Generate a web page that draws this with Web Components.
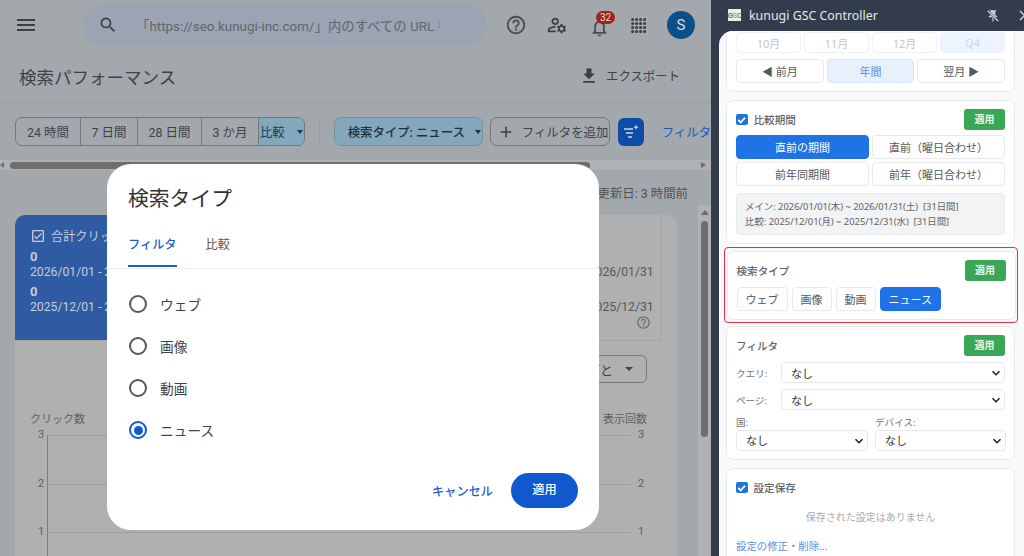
<!DOCTYPE html>
<html lang="ja">
<head>
<meta charset="utf-8">
<title>検索パフォーマンス</title>
<style>
  html, body { margin: 0; height: 100%; overflow: hidden; background: #323c4d; }
  body { display: flex; width: 1024px; height: 556px; font-family: Roboto, "Noto Sans CJK JP", sans-serif; }
</style>
</head>
<body>
<sc-page>
  <sc-dialog slot="dialog" heading="検索タイプ"></sc-dialog>
</sc-page>
<gsc-panel></gsc-panel>

<script>
// material icon paths, shared by the elements below
const ICONS = {
    menu: 'M3 18h18v-2H3v2zm0-5h18v-2H3v2zm0-7v2h18V6H3z',
    search: 'M15.5 14h-.79l-.28-.27A6.471 6.471 0 0 0 16 9.5 6.5 6.5 0 1 0 9.5 16c1.61 0 3.09-.59 4.23-1.57l.27.28v.79l5 4.99L20.49 19l-4.99-5zm-6 0C7.01 14 5 11.99 5 9.5S7.01 5 9.5 5 14 7.01 14 9.5 11.99 14 9.5 14z',
    help: 'M11 18h2v-2h-2v2zm1-16C6.48 2 2 6.48 2 12s4.48 10 10 10 10-4.48 10-10S17.52 2 12 2zm0 18c-4.41 0-8-3.59-8-8s3.59-8 8-8 8 3.59 8 8-3.59 8-8 8zm0-14c-2.21 0-4 1.79-4 4h2c0-1.1.9-2 2-2s2 .9 2 2c0 2-3 1.75-3 5h2c0-2.25 3-2.5 3-5 0-2.21-1.79-4-4-4z',
    manage: 'M4 18v-.65c0-.34.16-.66.41-.81C6.1 15.53 8.03 15 10 15c.03 0 .05 0 .08.01.1-.7.3-1.37.59-1.98-.22-.02-.44-.03-.67-.03-2.42 0-4.68.67-6.61 1.82-.88.52-1.39 1.5-1.39 2.53V20h9.26c-.42-.6-.75-1.28-.97-2H4zM10 12c2.21 0 4-1.79 4-4s-1.79-4-4-4-4 1.79-4 4 1.79 4 4 4zm0-6c1.1 0 2 .9 2 2s-.9 2-2 2-2-.9-2-2 .9-2 2-2zM20.75 16c0-.22-.03-.42-.06-.63l1.14-1.01-1-1.73-1.45.49c-.32-.27-.68-.48-1.08-.63L18 11h-2l-.3 1.49c-.4.15-.76.36-1.08.63l-1.45-.49-1 1.73 1.14 1.01c-.03.21-.06.41-.06.63s.03.42.06.63l-1.14 1.01 1 1.73 1.45-.49c.32.27.68.48 1.08.63L16 21h2l.3-1.49c.4-.15.76-.36 1.08-.63l1.45.49 1-1.73-1.14-1.01c.03-.21.06-.41.06-.63zM17 18c-1.1 0-2-.9-2-2s.9-2 2-2 2 .9 2 2-.9 2-2 2z',
    bell: 'M12 22c1.1 0 2-.9 2-2h-4c0 1.1.9 2 2 2zm6-6v-5c0-3.07-1.63-5.64-4.5-6.32V4c0-.83-.67-1.5-1.5-1.5s-1.5.67-1.5 1.5v.68C7.64 5.36 6 7.92 6 11v5l-2 2v1h16v-1l-2-2zm-2 1H8v-6c0-2.48 1.51-4.5 4-4.5s4 2.02 4 4.5v6z',
    download: 'M5 20h14v-2H5v2zM19 9h-4V3H9v6H5l7 7 7-7z',
    add: 'M19 13h-6v6h-2v-6H5v-2h6V5h2v6h6v2z',
    check: 'M19 3H5c-1.1 0-2 .9-2 2v14c0 1.1.9 2 2 2h14c1.1 0 2-.9 2-2V5c0-1.1-.9-2-2-2zm0 16H5V5h14v14zM17.99 9l-1.41-1.42-6.59 6.59-2.58-2.57-1.42 1.41 4 3.99z',
    pin: 'M16 9V4h1c.55 0 1-.45 1-1s-.45-1-1-1H7c-.55 0-1 .45-1 1s.45 1 1 1h1v5c0 1.66-1.34 3-3 3v2h5.97v7l1 1 1-1v-7H19v-2c-1.66 0-3-1.34-3-3z'
};
const icon = (name, size, color) =>
    `<svg width="${size}" height="${size}" viewBox="0 0 24 24" fill="${color}"><path d="${ICONS[name]}"/></svg>`;

class ScTopbar extends HTMLElement {
    constructor() {
        super();
        this.attachShadow({mode: 'open'});
        let dots = '';
        for (let y = 0; y < 4; y++) for (let x = 0; x < 4; x++) dots += `<circle cx="${1.6 + x * 4}" cy="${1.6 + y * 4}" r="1.5"/>`;
        this.shadowRoot.innerHTML = `
            <style>
                :host { display: flex; align-items: center; height: 50px; flex: none; }
                .menu { display: flex; margin-left: 14px; }
                .search { display: flex; align-items: center; width: 404px; height: 42px; margin-left: 45px; border-radius: 21px; background: #9aa4b2; }
                .search svg { margin-left: 15px; flex: none; }
                .q { width: 304px; margin-left: 18px; overflow: hidden; white-space: nowrap; font-size: 13.4px; color: #5f666e; }
                .btn { display: flex; position: relative; }
                .badge { position: absolute; left: 7px; top: -6px; width: 19px; height: 13px; border-radius: 7px; background: #a3201f; color: #e6dcdc; font-size: 10px; line-height: 13px; text-align: center; }
                .avatar { width: 28px; height: 28px; border-radius: 50%; background: #0b4f87; color: #d5dde3; font-size: 15px; line-height: 28px; text-align: center; margin-left: 21px; }
            </style>
            <span class="menu">${icon('menu', 24, '#3c3f42')}</span>
            <div class="search">${icon('search', 20, '#3c4043')}<span class="q">「https://seo.kunugi-inc.com/」内のすべての URL を検査</span></div>
            <span class="btn" style="margin-left:18px">${icon('help', 22, '#4a4d50')}</span>
            <span class="btn" style="margin-left:19px">${icon('manage', 22, '#3c3f42')}</span>
            <span class="btn" style="margin-left:21px;top:2px">${icon('bell', 21, '#4a4d50')}<span class="badge">32</span></span>
            <span class="btn" style="margin-left:21px"><svg width="15" height="15" viewBox="0 0 15 15" fill="#3c3f42">${dots}</svg></span>
            <span class="avatar">S</span>
        `;
    }
}

class ScTitlebar extends HTMLElement {
    constructor() {
        super();
        this.attachShadow({mode: 'open'});
        this.shadowRoot.innerHTML = `
            <style>
                :host { display: flex; align-items: center; justify-content: space-between; height: 52px; flex: none; padding: 0 31px 0 19px; border-bottom: 1px solid #9b9fa2; color: #3f4245; }
                h1 { margin: 0; font-size: 17.5px; font-weight: 400; }
                .export { display: flex; align-items: center; gap: 7px; font-size: 12.4px; }
            </style>
            <h1>検索パフォーマンス</h1>
            <div class="export">${icon('download', 20, '#3c3f42')}<span>エクスポート</span></div>
        `;
    }
}

class ScToolbar extends HTMLElement {
    constructor() {
        super();
        this.attachShadow({mode: 'open'});
        const caret = '<i class="caret"></i>';
        this.shadowRoot.innerHTML = `
            <style>
                :host { display: flex; align-items: center; height: 29px; flex: none; margin: 14px 0 0 15px; font-size: 12.4px; color: #404346; white-space: nowrap; }
                .seg { display: flex; width: 313px; height: 29px; box-sizing: border-box; border: 1px solid #74787b; border-radius: 7px; overflow: hidden; }
                .seg span { display: flex; align-items: center; justify-content: center; border-right: 1px solid #74787b; box-sizing: border-box; }
                .seg .on { background: #84a7bb; color: #0e3e63; border-right: 0; gap: 12px; }
                .sep { width: 1px; height: 29px; background: #999da0; margin: 0 14px; }
                .chip { display: flex; align-items: center; height: 29px; box-sizing: border-box; border-radius: 7px; }
                .type { width: 160px; background: #84a7bb; border: 1px solid #74909f; padding-left: 13px; gap: 10px; color: #1c3240; font-weight: 500; }
                .add { width: 129px; margin-left: 7px; border: 1px solid #74787b; padding-left: 6px; gap: 7px; }
                .sq { display: flex; align-items: center; justify-content: center; width: 28px; height: 28px; margin-left: 8px; border-radius: 6px; background: #0f4ca8; }
                .more { color: #1558c0; margin-left: 18px; }
                .caret { width: 0; height: 0; border: 3.5px solid transparent; border-top: 4px solid currentColor; border-bottom: 0; }
            </style>
            <div class="seg">
                <span style="width:65px">24 時間</span><span style="width:57px">7 日間</span><span style="width:64px">28 日間</span><span style="width:57px">3 か月</span><span class="on" style="flex:1">比較 ${caret}</span>
            </div>
            <div class="sep"></div>
            <div class="chip type">検索タイプ: ニュース ${caret}</div>
            <div class="chip add">${icon('add', 18, '#3c3f42')}<span>フィルタを追加</span></div>
            <div class="sq"><svg width="18" height="18" viewBox="0 0 18 18" fill="none" stroke="#cdd7ea" stroke-width="1.4"><path d="M2 6h9M4 10h7M6 14h4"/><path d="M14 1.5l.8 2 2 .8-2 .8-.8 2-.8-2-2-.8 2-.8z" fill="#cdd7ea" stroke="none"/></svg></div>
            <span class="more">フィルタ</span>
        `;
    }
}

class ScHscroll extends HTMLElement {
    constructor() {
        super();
        this.attachShadow({mode: 'open'});
        this.shadowRoot.innerHTML = `
            <style>
                :host { display: flex; align-items: center; height: 10px; flex: none; margin-top: 14px; background: #b0b1b2; }
                .l, .r { width: 0; height: 0; border: 3.5px solid transparent; }
                .l { border-left: 0; border-right: 4px solid #6e6e6e; }
                .t { width: 580px; height: 7px; margin-left: 6px; border-radius: 4px; background: #6e6e6e; }
                .r { border-right: 0; border-left: 5px solid #6e6e6e; margin-left: auto; margin-right: 5px; }
            </style>
            <i class="l"></i><i class="t"></i><i class="r"></i>
        `;
    }
}

class ScTile extends HTMLElement {
    constructor() {
        super();
        this.attachShadow({mode: 'open'});
        const on = this.hasAttribute('on');
        this.shadowRoot.innerHTML = `
            <style>
                :host { display: block; padding: 14px 0 0 15px; font-size: 12.2px; white-space: nowrap; overflow: hidden; position: relative; color: ${on ? '#c3cddc' : '#55585b'}; background: ${on ? '#2f5ba3' : '#b0b0b0'}; }
                .h { display: flex; align-items: center; gap: 5px; height: 14px; }
                b { display: block; font-size: 13px; line-height: 15px; margin-top: 6px; font-weight: 700; }
                .d { display: block; line-height: 15px; margin-top: 1px; }
                .q { position: absolute; right: 10px; bottom: 10px; display: flex; }
            </style>
            <div class="h">${on ? icon('check', 16, '#c3cddc') : ''}<span>${this.getAttribute('label')}</span></div>
            <b>0</b><span class="d">2026/01/01 - 2026/01/31</span>
            <b style="margin-top:4px">0</b><span class="d">2025/12/01 - 2025/12/31</span>
            ${this.hasAttribute('help') ? `<span class="q">${icon('help', 15, '#6a6d70')}</span>` : ''}
        `;
    }
}

class ScChart extends HTMLElement {
    constructor() {
        super();
        this.attachShadow({mode: 'open'});
        const rows = ['3', '2', '1', '0'].map(n => `<span class="n">${n}</span><span class="g"></span><span class="n r">${n}</span>`).join('');
        this.shadowRoot.innerHTML = `
            <style>
                :host { display: block; padding: 0 15px; font-size: 11px; color: #5d6063; }
                .by { display: flex; align-items: center; justify-content: flex-end; gap: 12px; width: 130px; height: 28px; box-sizing: border-box; margin: 14px 0 0 auto; padding-right: 13px; border: 1px solid #77797b; border-radius: 6px; font-size: 13px; color: #404346; }
                .by i { border: 4px solid transparent; border-top: 4px solid #404346; border-bottom: 0; }
                .heads { display: flex; justify-content: space-between; margin-top: 29px; line-height: 16px; }
                .plot { display: grid; grid-template-columns: 17px 1fr 17px; grid-auto-rows: 48.5px; margin-top: 7px; margin-right: -1px; }
                .n { line-height: 0; padding-left: 8px; }
                .n.r { padding-left: 7px; }
                .g { border-top: 1px solid #9e9e9e; border-left: 1px solid #7d7d7d; }
            </style>
            <div class="by">日ごと <i></i></div>
            <div class="heads"><span>クリック数</span><span>表示回数</span></div>
            <div class="plot">${rows}</div>
        `;
    }
}

class ScVscroll extends HTMLElement {
    constructor() {
        super();
        this.attachShadow({mode: 'open'});
        this.shadowRoot.innerHTML = `
            <style>
                :host { display: flex; flex-direction: column; align-items: center; width: 13px; flex: none; background: #b0b1b2; }
                i { width: 0; height: 0; margin-top: 5px; border: 4px solid transparent; border-top: 0; border-bottom: 5px solid #6e6e6e; }
                b { width: 7px; height: 216px; margin-top: 6px; border-radius: 4px; background: #6e6e6e; }
            </style>
            <i></i><b></b>
        `;
    }
}

class ScPage extends HTMLElement {
    constructor() {
        super();
        this.attachShadow({mode: 'open'});
        this.shadowRoot.innerHTML = `
            <style>
                :host { display: flex; flex-direction: column; width: 711px; height: 556px; flex: none; overflow: hidden; position: relative; background: #a3a8ac; }
                .upd { height: 45px; flex: none; box-sizing: border-box; padding: 16px 23px 0 0; text-align: right; font-size: 12.4px; line-height: 15px; color: #505356; }
                .body { display: flex; flex: 1; min-height: 0; margin-top: -10px; padding-top: 0; }
                .col { flex: 1; padding: 10px 21px 0 15px; }
                .card { background: #b0b0b0; border-radius: 10px 10px 0 0; height: 100%; padding-right: 15px; }
                .tiles { display: grid; grid-template-columns: repeat(4, 1fr); height: 125px; border-right: 1px solid #a4a4a4; border-bottom: 1px solid #a4a4a4; border-radius: 10px 0 0 0; overflow: hidden; }
                .dialog-slot { position: absolute; inset: 0; pointer-events: none; }
            </style>
            <sc-topbar></sc-topbar>
            <sc-titlebar></sc-titlebar>
            <sc-toolbar></sc-toolbar>
            <sc-hscroll></sc-hscroll>
            <div class="upd">データの最終更新日: 3 時間前</div>
            <div class="body">
                <div class="col">
                    <div class="card">
                        <div class="tiles">
                            <sc-tile on label="合計クリック数"></sc-tile>
                            <sc-tile label="合計表示回数"></sc-tile>
                            <sc-tile label="平均 CTR"></sc-tile>
                            <sc-tile help label="平均掲載順位"></sc-tile>
                        </div>
                        <sc-chart></sc-chart>
                    </div>
                </div>
                <sc-vscroll></sc-vscroll>
            </div>
            <slot name="dialog"></slot>
        `;
    }
}

class ScRadio extends HTMLElement {
    constructor() {
        super();
        this.attachShadow({mode: 'open'});
        const on = this.hasAttribute('checked');
        this.shadowRoot.innerHTML = `
            <style>
                :host { display: flex; align-items: center; gap: 13px; height: 42px; font-size: 13.7px; color: #3f4245; }
                .c { width: 18px; height: 18px; box-sizing: border-box; border: 2px solid ${on ? '#1558d0' : '#55585b'}; border-radius: 50%; display: flex; align-items: center; justify-content: center; }
                .c i { width: 9px; height: 9px; border-radius: 50%; background: ${on ? '#1558d0' : 'transparent'}; }
            </style>
            <span class="c"><i></i></span><slot></slot>
        `;
    }
}

class ScDialog extends HTMLElement {
    constructor() {
        super();
        this.attachShadow({mode: 'open'});
        this.shadowRoot.innerHTML = `
            <style>
                :host { display: flex; flex-direction: column; position: absolute; left: 107px; top: 164px; width: 492px; height: 366px; border-radius: 24px; background: #fff; }
                h2 { margin: 21px 0 0 21px; font-size: 20.8px; line-height: 28px; font-weight: 400; color: #333; }
                .tabs { display: flex; gap: 29px; height: 42px; margin-top: 13px; padding-left: 21px; border-bottom: 1px solid #eee; font-size: 12.2px; line-height: 38px; color: #55585b; }
                .tabs .on { color: #1a5fd0; border-bottom: 2px solid #1a5fd0; height: 41px; box-sizing: border-box; font-weight: 500; }
                .radios { padding: 14px 0 0 22px; }
                .foot { display: flex; align-items: center; justify-content: flex-end; gap: 18px; margin-top: auto; padding: 0 21px 22px 0; font-size: 12.2px; font-weight: 500; color: #1a5fd0; }
                .ok { width: 67px; height: 35px; border-radius: 18px; background: #0f58cd; color: #fff; text-align: center; line-height: 35px; }
            </style>
            <h2>${this.getAttribute('heading')}</h2>
            <div class="tabs"><span class="on">フィルタ</span><span>比較</span></div>
            <div class="radios">
                <sc-radio>ウェブ</sc-radio>
                <sc-radio>画像</sc-radio>
                <sc-radio>動画</sc-radio>
                <sc-radio checked>ニュース</sc-radio>
            </div>
            <div class="foot"><span>キャンセル</span><span class="ok">適用</span></div>
        `;
    }
}

/* ---- extension panel ---- */

class GscButton extends HTMLElement {
    constructor() {
        super();
        this.attachShadow({mode: 'open'});
        this.shadowRoot.innerHTML = `
            <style>
                :host { display: flex; align-items: center; justify-content: center; box-sizing: border-box; height: 24px; padding: 0 8px; border: 1px solid #e6e8eb; border-radius: 4px; background: #fff; color: #55585c; font-size: 11px; white-space: nowrap; }
                :host([on]) { background: #1f73e6; border-color: #1f73e6; color: #fff; }
                :host([soft]) { background: #e8f0fe; border-color: #d6e4fb; color: #5b8fe8; }
                :host([dim]) { height: 21px; color: #c4c6c9; border-color: #f0f1f3; }
                :host([dim][soft]) { background: #eef4fd; border-color: #eef4fd; color: #c6d7f7; }
            </style>
            <slot></slot>
        `;
    }
}

class GscCard extends HTMLElement {
    constructor() {
        super();
        this.attachShadow({mode: 'open'});
        this.shadowRoot.innerHTML = `
            <style>
                :host { display: block; padding: 8px 9px 8px 9px; background: #fff; border: 1px solid #e8eaed; border-radius: 7px; }
            </style>
            <slot></slot>
        `;
    }
}

class GscHead extends HTMLElement {
    constructor() {
        super();
        this.attachShadow({mode: 'open'});
        const checked = this.hasAttribute('checked');
        this.shadowRoot.innerHTML = `
            <style>
                :host { display: flex; align-items: center; gap: 6px; height: 21px; font-size: 10.6px; font-weight: 500; color: #5f6368; }
                .box { width: 11.5px; height: 11.5px; border-radius: 2px; background: #1a73d8; display: flex; }
                .apply { margin-left: auto; width: 41px; height: 21px; border-radius: 3px; background: #3aa757; color: #e8f6ec; font-size: 10px; font-weight: 700; text-align: center; line-height: 21px; }
            </style>
            ${checked ? '<span class="box"><svg viewBox="0 0 12 12" width="11.5" height="11.5" fill="none" stroke="#fff" stroke-width="1.9"><path d="M2.4 6.2l2.5 2.5 4.6-5"/></svg></span>' : ''}
            <span><slot></slot></span>
            ${this.hasAttribute('apply') ? '<span class="apply">適用</span>' : ''}
        `;
    }
}

class GscSelect extends HTMLElement {
    constructor() {
        super();
        this.attachShadow({mode: 'open'});
        this.shadowRoot.innerHTML = `
            <style>
                :host { display: flex; align-items: center; justify-content: space-between; box-sizing: border-box; height: 21px; padding: 0 3px 0 9px; border: 1px solid #e6e8eb; border-radius: 4px; background: #fff; color: #333; font-size: 11px; }
            </style>
            <span><slot></slot></span>
            <svg width="10" height="10" viewBox="0 0 10 10" fill="none" stroke="#222" stroke-width="1.6"><path d="M1.5 3.2L5 6.7l3.5-3.5"/></svg>
        `;
    }
}

class GscPanel extends HTMLElement {
    constructor() {
        super();
        this.attachShadow({mode: 'open'});
        this.shadowRoot.innerHTML = `
            <style>
                :host { display: flex; flex-direction: column; width: 313px; height: 556px; flex: none; overflow: hidden; background: #323c4d; font-family: "Noto Sans", "Noto Sans CJK JP", sans-serif; }
                header { display: flex; align-items: center; height: 31px; flex: none; padding-left: 16px; color: #e6e8ec; font-size: 12.4px; white-space: nowrap; }
                .logo { display: flex; margin-right: 7px; }
                header .pin { display: flex; margin-left: auto; margin-right: 19px; }
                header .x { display: flex; margin-right: -6px; }
                .body { flex: 1; min-height: 0; margin-left: 8px; padding: 0 9px 0 7px; display: flex; flex-direction: column; gap: 8px; overflow: hidden; background: #f8f9fb; border-radius: 14px 0 0 0; }
                .clip { margin-top: -12px; padding-top: 12px; }
                .row { display: grid; gap: 3px; margin-top: 3px; }
                .r4 { grid-template-columns: repeat(4, 1fr); }
                .r3 { grid-template-columns: repeat(3, 1fr); margin-top: 6px; }
                .r2 { grid-template-columns: repeat(2, 1fr); }
                .info { margin-top: 7px; padding: 5px 8px; height: 42px; box-sizing: border-box; background: #f1f3f4; border: 1px solid #e8eaed; border-radius: 4px; font-size: 9.4px; line-height: 15px; color: #5f6368; white-space: pre; }
                .mark { margin: -5px -3px -5px -2px; padding: 2.5px 1.5px; border: 1.5px solid #e8303a; border-radius: 4px; }
                .types { display: flex; gap: 4px; margin-top: 6px; }
                .f { display: grid; grid-template-columns: 45px 1fr; align-items: center; margin-top: 6px; font-size: 9.6px; color: #70757a; }
                .f2 { display: grid; grid-template-columns: 132px 131px; gap: 0 7px; margin-top: 5px; font-size: 9.6px; color: #70757a; line-height: 15px; }
                .none { text-align: center; font-size: 10px; color: #aaa; margin-top: 11px; line-height: 16px; }
                .link { margin-top: 13px; font-size: 10.4px; line-height: 16px; color: #5b8fe8; }
            </style>
            <header>
                <span class="logo"><svg width="15" height="15" viewBox="0 0 15 15"><rect width="15" height="15" rx="1" fill="#3a3a36"/><rect x="1" y="1" width="13" height="12" fill="#e9efe2"/><text x="0.6" y="10.4" font-family="Liberation Sans" font-size="7" font-weight="700" fill="#2f7de0">G</text><text x="5.4" y="10.4" font-family="Liberation Sans" font-size="7" font-weight="700" fill="#e0a020">S</text><text x="9.8" y="10.4" font-family="Liberation Sans" font-size="7" font-weight="700" fill="#35a853">C</text></svg></span>
                kunugi GSC Controller
                <span class="pin"><svg width="14" height="14" viewBox="0 0 24 24" fill="#cfd3d9"><path d="${ICONS.pin}"/><path d="M3 3l18 18" stroke="#323c4d" stroke-width="4"/><path d="M3 3l18 18" stroke="#cfd3d9" stroke-width="2"/></svg></span>
                <span class="x"><svg width="11" height="11" viewBox="0 0 11 11" stroke="#cfd3d9" stroke-width="1.3"><path d="M1 1l9 9M10 1l-9 9"/></svg></span>
            </header>
            <div class="body">
                <gsc-card style="margin-top:-9px; padding-top:9px">
                    <div class="row r4" style="margin:0">
                        <gsc-button dim>10月</gsc-button><gsc-button dim>11月</gsc-button><gsc-button dim>12月</gsc-button><gsc-button dim soft>Q4</gsc-button>
                    </div>
                    <div class="row r3"><gsc-button>◀ 前月</gsc-button><gsc-button soft>年間</gsc-button><gsc-button>翌月 ▶</gsc-button></div>
                </gsc-card>
                <gsc-card>
                    <gsc-head checked apply>比較期間</gsc-head>
                    <div class="row r2" style="margin-top:5px"><gsc-button on>直前の期間</gsc-button><gsc-button>直前（曜日合わせ）</gsc-button></div>
                    <div class="row r2"><gsc-button>前年同期間</gsc-button><gsc-button>前年（曜日合わせ）</gsc-button></div>
                    <div class="info">メイン: 2026/01/01(木) ~ 2026/01/31(土)  [31日間]
比較: 2025/12/01(月) ~ 2025/12/31(水)  [31日間]</div>
                </gsc-card>
                <div class="mark">
                    <gsc-card>
                        <gsc-head apply>検索タイプ</gsc-head>
                        <div class="types"><gsc-button>ウェブ</gsc-button><gsc-button>画像</gsc-button><gsc-button>動画</gsc-button><gsc-button on>ニュース</gsc-button></div>
                    </gsc-card>
                </div>
                <gsc-card>
                    <gsc-head apply>フィルタ</gsc-head>
                    <div class="f"><span>クエリ:</span><gsc-select>なし</gsc-select></div>
                    <div class="f"><span>ページ:</span><gsc-select>なし</gsc-select></div>
                    <div class="f2"><span>国:</span><span>デバイス:</span><gsc-select>なし</gsc-select><gsc-select>なし</gsc-select></div>
                </gsc-card>
                <gsc-card>
                    <gsc-head checked>設定保存</gsc-head>
                    <div class="none">保存された設定はありません</div>
                    <div class="link">設定の修正・削除...</div>
                </gsc-card>
            </div>
        `;
    }
}

customElements.define('sc-topbar', ScTopbar);
customElements.define('sc-titlebar', ScTitlebar);
customElements.define('sc-toolbar', ScToolbar);
customElements.define('sc-hscroll', ScHscroll);
customElements.define('sc-tile', ScTile);
customElements.define('sc-chart', ScChart);
customElements.define('sc-vscroll', ScVscroll);
customElements.define('sc-page', ScPage);
customElements.define('sc-radio', ScRadio);
customElements.define('sc-dialog', ScDialog);
customElements.define('gsc-button', GscButton);
customElements.define('gsc-card', GscCard);
customElements.define('gsc-head', GscHead);
customElements.define('gsc-select', GscSelect);
customElements.define('gsc-panel', GscPanel);
</script>
</body>
</html>
